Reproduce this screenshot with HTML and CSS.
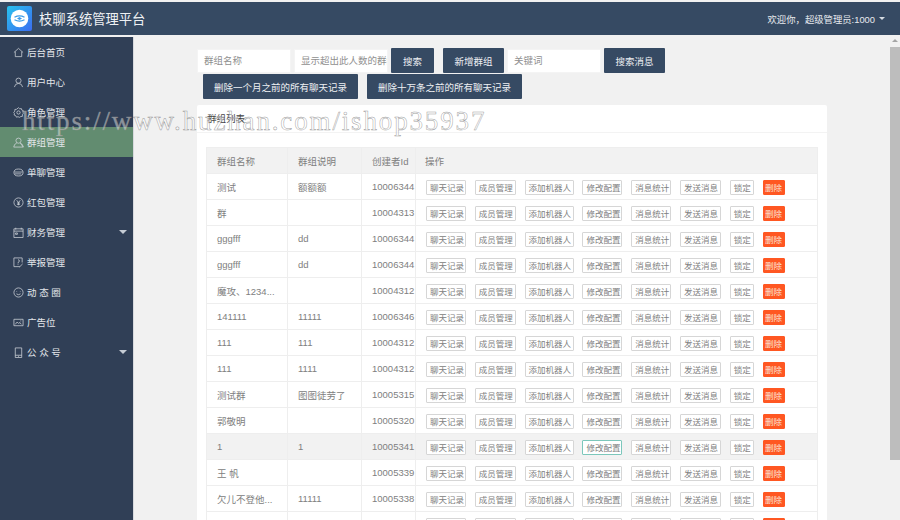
FILE: index.html
```html
<!DOCTYPE html>
<html lang="zh-CN">
<head>
  <meta charset="UTF-8">
  <title>枝聊系统管理平台</title>
  <link rel="stylesheet" href="styles.css">
</head>
<body>

  <!-- Header -->
  <div class="header">
    <div class="brand">
      <svg class="logo" viewBox="0 0 25 25">
        <defs>
          <linearGradient id="logo-bg" x1="0" y1="0" x2="1" y2="1">
            <stop offset="0" stop-color="#27c3ee"/>
            <stop offset="1" stop-color="#3c6cf0"/>
          </linearGradient>
        </defs>
        <rect width="25" height="25" rx="2" fill="url(#logo-bg)"/>
        <circle cx="12.5" cy="12.5" r="8.800" fill="#fff"/>
        <path d="M7.500 11.300q5-2.800 10 0M7.500 13.700q5 2.800 10 0" fill="none" stroke="#3a9be8" stroke-width="1.300"/>
        <path d="M10 12.500l2.500-1.500 2.500 1.500-2.500 1.500z" fill="#3a9be8"/>
      </svg>
      <span class="brand-name">枝聊系统管理平台</span>
    </div>
    <div class="user-info">欢迎你，超级管理员:1000 <span class="caret"></span></div>
  </div>

  <div class="layout">
    <!-- Sidebar -->
    <div class="sidebar">
      <a class="nav-link">
        <svg viewBox="0 0 12 12"><path d="M1 6l5-4.500 5 4.500M2.500 5v5.500h7V5"/></svg>后台首页
      </a>
      <a class="nav-link">
        <svg viewBox="0 0 12 12"><circle cx="6" cy="4" r="2.800"/><path d="M1.500 11q.8-4 4.500-4t4.500 4"/></svg>用户中心
      </a>
      <a class="nav-link">
        <svg viewBox="0 0 12 12"><circle cx="6" cy="6" r="1.800"/><path d="M6 .8l1.300 1.200 1.800-.3.5 1.700 1.700.6-.3 1.800L11.200 7l-1 1.400.1 1.800-1.800.2L7 11.300 5.500 10.600l-1.700.5-.8-1.600-1.700-.7.2-1.800L.8 5.800l1.200-1.300L2 2.700l1.800-.2z"/></svg>角色管理
      </a>
      <a class="nav-link active">
        <svg viewBox="0 0 12 12"><circle cx="6" cy="4" r="2.800"/><path d="M.8 11q.4-3.500 3.200-4.300M8 6.700q2.800.8 3.200 4.300zM.8 11h10.400"/></svg>群组管理
      </a>
      <a class="nav-link">
        <svg viewBox="0 0 12 12"><ellipse cx="6" cy="6" rx="5" ry="3.800"/><path d="M1.500 5.500h9M2 7.500h7"/></svg>单聊管理
      </a>
      <a class="nav-link">
        <svg viewBox="0 0 12 12"><circle cx="6" cy="6" r="5"/><path d="M4 3.500l2 2.500 2-2.500M6 6v3M4.300 6.500h3.400M4.300 8h3.400"/></svg>红包管理
      </a>
      <a class="nav-link has-sub">
        <svg viewBox="0 0 12 12"><path d="M1 2h10v9.500H1zM3 .8v2M9 .8v2M1 4.500h10M2.800 6.500h2v1.500h-2z"/></svg>财务管理
      </a>
      <a class="nav-link">
        <svg viewBox="0 0 12 12"><path d="M7.500 10.500H1V1h9v5M5.500 3q1.500 0 1.500 1.200T5.500 6v1M5.500 8v.8M7 11l3.500-3.500"/></svg>举报管理
      </a>
      <a class="nav-link">
        <svg viewBox="0 0 12 12"><circle cx="6" cy="6" r="5"/><path d="M4 4.500v.6M8 4.500v.6M3.800 7.500q2.200 1.800 4.400 0"/></svg>动 态 圈
      </a>
      <a class="nav-link">
        <svg viewBox="0 0 12 12"><path d="M1 2.500h10v7H1zM2.500 8l2-2.500 1.500 1.500 1.500-1 1.500 2M8 4.300h1"/></svg>广告位
      </a>
      <a class="nav-link has-sub">
        <svg viewBox="0 0 12 12"><path d="M2.500 1h7v10.500h-7zM2.500 9h7M5.500 10.200h1"/></svg>公 众 号
      </a>
    </div>

    <!-- Main content -->
    <div class="main-content">
      <div class="filters">
        <div class="filter-row">
          <span class="input name-input">群组名称</span>
          <span class="input count-input">显示超出此人数的群组</span>
          <button class="btn search-btn">搜索</button>
          <button class="btn add-btn">新增群组</button>
          <span class="input keyword-input">关键词</span>
          <button class="btn msg-btn">搜索消息</button>
        </div>
        <div class="filter-row second">
          <button class="btn wide-btn">删除一个月之前的所有聊天记录</button>
          <button class="btn wide-btn">删除十万条之前的所有聊天记录</button>
        </div>
      </div>

      <div class="card">
        <div class="card-head">群组列表</div>
        <div class="card-body">
          <table class="group-table">
            <thead>
              <tr><th class="col-name">群组名称</th><th class="col-desc">群组说明</th><th class="col-id">创建者Id</th><th class="col-ops">操作</th></tr>
            </thead>
            <tbody id="group-rows"></tbody>
          </table>
        </div>
      </div>
    </div>

    <!-- Scrollbar -->
    <div class="scrollbar">
      <div class="scroll-arrow"></div>
      <div class="scroll-thumb"></div>
    </div>
  </div>

  <div class="watermark">https://www.huzhan.com/ishop35937</div>

  <script src="script.js"></script>
</body>
</html>
```

FILE: styles.css
```css
/* Reset */
* {
  margin: 0;
  padding: 0;
  box-sizing: border-box;
  font-family: "Liberation Sans", "Noto Sans CJK SC", sans-serif;
}

body {
  width: 900px;
  height: 520px;
  overflow: hidden;
  background-color: #f1f1f1;
  padding-top: 2px;
  color: #666;
  position: relative;
}

/* Header */
.header {
  height: 33px;
  background-color: #364a63;
  display: flex;
  justify-content: space-between;
  align-items: center;
  padding: 0 15px 0 7px;
  color: #fff;
}
.brand {
  display: flex;
  align-items: center;
}
.logo {
  width: 25px;
  height: 25px;
  margin-right: 7px;
}
.brand-name {
  font-size: 13.300px;
  color: #eef1f4;
}
.user-info {
  font-size: 9.350px;
  color: #e8ebef;
  display: flex;
  align-items: center;
  gap: 4px;
}
.caret {
  width: 0;
  height: 0;
  border-left: 3px solid transparent;
  border-right: 3px solid transparent;
  border-top: 3px solid #d5dbe2;
}

/* Layout */
.layout {
  display: flex;
  margin-top: 2px;
  height: 483px;
}

/* Sidebar */
.sidebar {
  width: 133px;
  flex-shrink: 0;
  background-color: #303f56;
}
.nav-link {
  display: flex;
  align-items: center;
  height: 30px;
  padding-left: 13px;
  font-size: 9.500px;
  color: #e3e6ea;
  position: relative;
}
.nav-link svg {
  width: 11px;
  height: 11px;
  margin-right: 3px;
  fill: none;
  stroke: #d5d9de;
  stroke-width: .8;
}
.nav-link.active {
  background-color: #628c70;
}
.has-sub::after {
  content: "";
  position: absolute;
  right: 6px;
  top: 13px;
  border-left: 4px solid transparent;
  border-right: 4px solid transparent;
  border-top: 4px solid #c5ccd4;
}

/* Main content */
.main-content {
  flex: 1;
  overflow: hidden;
  border-left: 1px solid #d8dade;
  padding: 11px 63px 0 63px;
}

/* Filters */
.filter-row {
  display: flex;
  align-items: flex-start;
}
.filter-row.second {
  padding-left: 6px;
  gap: 9px;
  margin-top: 1px;
}
.input {
  height: 24px;
  margin-top: 1px;
  background-color: #fff;
  border: 1px solid #f4f4f4;
  font-size: 9.500px;
  line-height: 22px;
  color: #8f8f8f;
  padding-left: 6px;
  white-space: nowrap;
  overflow: hidden;
}
.name-input {
  width: 94px;
  margin-right: 3px;
}
.count-input {
  width: 94px;
  margin-right: 3px;
}
.keyword-input {
  width: 94px;
  margin-right: 3px;
}
.btn {
  height: 25px;
  border: 0;
  border-radius: 1px;
  background-color: #364a63;
  color: #eef0f3;
  font-size: 9.500px;
}
.search-btn {
  width: 43px;
  margin-right: 9px;
}
.add-btn {
  width: 61px;
  margin-right: 3px;
}
.msg-btn {
  width: 61px;
}
.wide-btn {
  width: 155px;
}

/* Card */
.card {
  margin-top: 6px;
  width: 630px;
  background-color: #fff;
  border-radius: 2px;
}
.card-head {
  height: 28px;
  line-height: 28px;
  padding-left: 10px;
  font-size: 9.500px;
  color: #444;
  border-bottom: 1px solid #f3f3f3;
}
.card-body {
  padding: 14px 10px 15px 9px;
}

/* Table */
.group-table {
  width: 611px;
  table-layout: fixed;
  border-collapse: collapse;
  font-size: 9.500px;
}
.group-table th,
.group-table td {
  height: 26px;
  border: 1px solid #eeeeee;
  padding: 0 0 0 10px;
  text-align: left;
  font-weight: normal;
  color: #808080;
  white-space: nowrap;
  overflow: hidden;
}
.group-table th {
  background-color: #f2f2f2;
}
.col-name {
  width: 81px;
}
.col-desc {
  width: 74px;
}
.col-id {
  width: 54px;
}
.col-ops {
  width: 402px;
}
.group-table .col-ops,
.group-table .ops {
  padding-left: 9px;
  box-shadow: -3px 0 3px rgba(0, 0, 0, .04);
}
.group-table .ops {
  padding-left: 10px;
  padding-top: 1px;
}
.group-table tr.hover td {
  background-color: #f2f2f2;
}
.ops-list {
  display: flex;
  gap: 8.800px;
}
.mini-btn {
  height: 15px;
  padding: 0 3px;
  border: 1px solid #d6d6d6;
  border-radius: 1px;
  background-color: #fff;
  color: #808080;
  font-size: 8.500px;
  white-space: nowrap;
}
.mini-btn.w40 {
  width: 40px;
}
.mini-btn.w41 {
  width: 41px;
}
.mini-btn.w49 {
  width: 49px;
}
.mini-btn.w24 {
  width: 24px;
}
.mini-btn.focus {
  border-color: #7cc7bb;
}
.mini-btn.danger {
  width: 22px;
  padding: 0;
  border-color: #ff5722;
  background-color: #ff5722;
  color: #fbe4dc;
}

/* Scrollbar */
.scrollbar {
  width: 10px;
  flex-shrink: 0;
  background-color: #f1f1f1;
}
.scroll-arrow {
  height: 10px;
  display: flex;
  justify-content: center;
  padding-top: 2px;
}
.scroll-arrow::before {
  content: "";
  height: 0;
  border-left: 3px solid transparent;
  border-right: 3px solid transparent;
  border-bottom: 3px solid #a5a5a5;
}
.scroll-thumb {
  height: 413px;
  background-color: #bdbdbd;
}

/* Watermark over the page */
.watermark {
  position: absolute;
  left: 22px;
  top: 106px;
  font-family: "Liberation Serif", serif;
  font-size: 27px;
  letter-spacing: 1.850px;
  color: rgba(255, 255, 255, .45);
  -webkit-text-stroke: .5px rgba(140, 140, 140, .85);
  white-space: nowrap;
}
```

FILE: script.js
```js
// group rows: name, description, creator id
var groups = [
  ['测试', '额额额', '10006344'],
  ['群', '', '10004313'],
  ['gggfff', 'dd', '10006344'],
  ['gggfff', 'dd', '10006344'],
  ['魔攻、1234...', '', '10004312'],
  ['141111', '11111', '10006346'],
  ['111', '111', '10004312'],
  ['111', '1111', '10004312'],
  ['测试群', '图图徒劳了', '10005315'],
  ['郭敬明', '', '10005320'],
  ['1', '1', '10005341'],
  ['王 帆', '', '10005339'],
  ['欠儿不登他...', '11111', '10005338'],
  ['', '', '']
];

var ops = [
  ['聊天记录', 'w40'], ['成员管理', 'w41'], ['添加机器人', 'w49'], ['修改配置', 'w40'],
  ['消息统计', 'w40'], ['发送消息', 'w41'], ['锁定', 'w24'], ['删除', 'danger']
];

var html = '';
groups.forEach(function (g, i) {
  html += '<tr' + (i === 10 ? ' class="hover"' : '') + '>';
  html += '<td>' + g[0] + '</td><td>' + g[1] + '</td><td>' + g[2] + '</td>';
  html += '<td class="ops"><div class="ops-list">';
  ops.forEach(function (op) {
    var cls = 'mini-btn ' + op[1];
    if (i === 10 && op[0] === '修改配置') cls += ' focus';
    html += '<button class="' + cls + '">' + op[0] + '</button>';
  });
  html += '</div></td></tr>';
});
document.getElementById('group-rows').innerHTML = html;
```
